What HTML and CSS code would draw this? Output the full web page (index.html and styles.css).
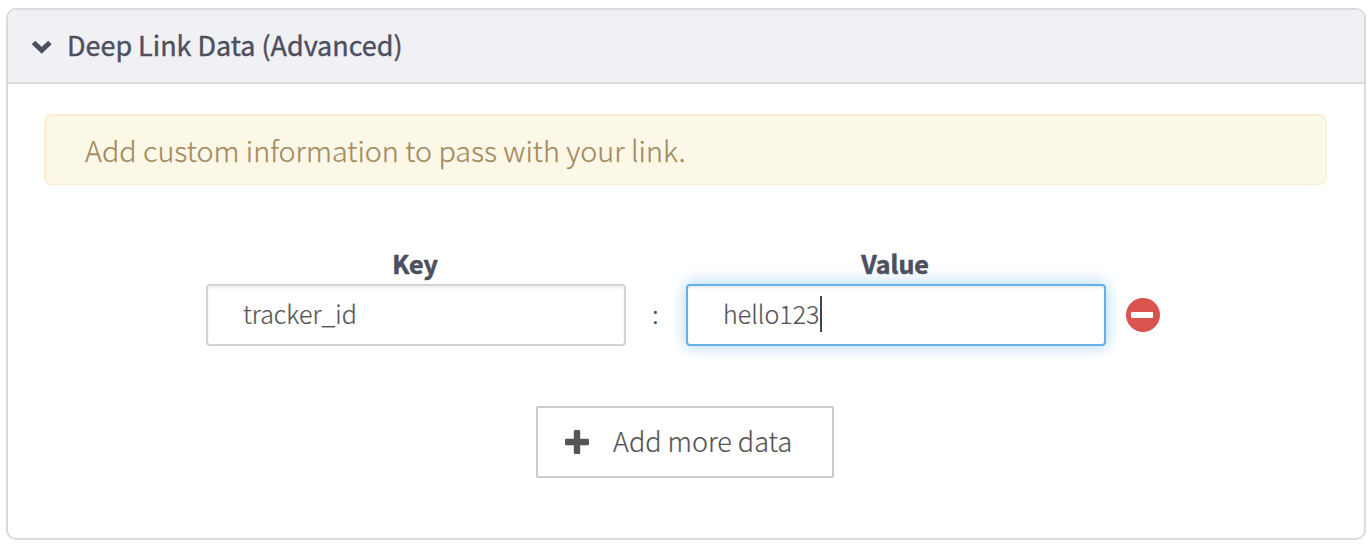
FILE: index.html
```html
<!DOCTYPE html>
<html lang="en">
<head>
<meta charset="utf-8">
<title>Deep Link Data</title>
<link rel="stylesheet" href="styles.css">
</head>
<body>
<section class="panel">
  <header class="panel-header">
    <svg class="chevron" viewBox="0 0 20 14" width="20" height="14"><path d="M1.500 2.500L9.700 10.400L17.900 2.500" fill="none" stroke="currentColor" stroke-width="5"/></svg>
    <h2 class="panel-title"><span>Deep Link Data (Advanced)</span></h2>
  </header>
  <div class="panel-body">
    <div class="notice"><span>Add custom information to pass with your link.</span></div>
    <div class="pairs">
      <label class="label"><span>Key</span></label>
      <label class="label label-value"><span>Value</span></label>
      <div class="field"><span class="field-text">tracker_id</span></div>
      <span class="colon">:</span>
      <div class="field field-focus"><span class="field-text">hello123</span><span class="caret"></span></div>
      <svg class="remove" viewBox="0 0 34 34" width="34" height="34"><circle cx="17" cy="17" r="17" fill="#d9534f"/><rect x="5" y="14" width="22" height="6" rx="0.8" fill="#fff"/></svg>
    </div>
    <button class="add" type="button">
      <svg class="plus" viewBox="0 0 24 24" width="24" height="24"><path d="M10 0h4q1.200 0 1.200 1.200V8.800H22.800q1.200 0 1.200 1.200v4q0 1.200-1.200 1.200H15.200V22.800q0 1.200-1.200 1.200h-4q-1.200 0-1.200-1.200V15.200H1.200q-1.200 0-1.200-1.200v-4q0-1.200 1.200-1.200H8.800V1.200q0-1.200 1.200-1.200z" fill="currentColor"/></svg>
      <span class="add-text">Add more data</span>
    </button>
  </div>
</section>
</body>
</html>
```
FILE: styles.css
```css
* { box-sizing: border-box; }
body {
  margin: 0;
  padding: 8px 6px 10px;
  height: 550px;
  background: #fff;
  color: #4d4f5e;
  font-family: "Noto Sans CJK SC", "Open Sans", sans-serif;
}
.panel {
  height: 532px;
  border: 2px solid #dbdbdb;
  border-radius: 10px;
  overflow: hidden;
}
.panel-header {
  height: 74px;
  display: flex;
  align-items: center;
  padding: 0 0 0 24px;
  background: #f0f1f5;
  border-bottom: 2px solid #dbdbdb;
}
.chevron { margin-top: 2px; }
.panel-title {
  margin: 0 0 2px 15px;
  font-size: 26.95px;
  line-height: 40px;
  font-weight: 400;
  -webkit-text-stroke: 0.4px currentColor;
}
.panel-body {
  display: flex;
  flex-direction: column;
  align-items: center;
  padding: 30px 36px 0;
}
.notice {
  width: 1283px;
  height: 71px;
  align-self: flex-start;
  padding: 0 39px;
  border: 2px solid #fcedcf;
  border-right-width: 1px;
  border-bottom-width: 1px;
  border-radius: 8px;
  background: #fcf8e7;
  color: #a48a60;
  font-size: 28.75px;
  line-height: 68px;
  font-weight: 300;
  -webkit-text-stroke: 0.25px currentColor;
}
.pairs {
  display: grid;
  grid-template-columns: 420px 60px 420px 54px;
  grid-template-rows: 40px 62px;
  margin: 59px 0 0 -2px;
  align-self: flex-start;
  padding-left: 164px;
}
.label {
  padding-right: 2px;
  text-align: center;
  font-size: 25px;
  line-height: 38px;
  font-weight: 700;
  -webkit-text-stroke: 0.6px currentColor;
}
.label-value { grid-column: 3 / 5; width: 420px; }
.field {
  display: flex;
  align-items: center;
  padding-left: 35px;
  border: 2px solid #d2d2d8;
  border-radius: 4px;
  box-shadow: inset 0 2px 3px rgba(0, 0, 0, .075);
  color: #555;
  font-size: 25px;
  line-height: 54px;
  font-weight: 300;
  -webkit-text-stroke: 0.2px currentColor;
}
.field-text { padding-bottom: 4px; }
.field-focus {
  border-color: #66afe9;
  box-shadow: inset 0 2px 3px rgba(0, 0, 0, .075), 0 0 16px rgba(102, 175, 233, .6);
}
.caret { width: 2px; height: 36px; margin: 0 0 2px 1px; background: #444; }
.colon { padding-right: 1px; text-align: center; font-size: 25px; line-height: 59px; font-weight: 300; -webkit-text-stroke: 0.3px currentColor; }
.remove { align-self: center; margin-left: 20px; }
.add {
  display: flex;
  align-items: center;
  width: 298px;
  height: 72px;
  margin: 60px 2px 0 0;
  padding: 0 0 0 27px;
  border: 2px solid #ccc;
  border-radius: 2px;
  background: #fff;
  color: #555;
  font: 300 27px/60px "Noto Sans CJK SC", "Open Sans", sans-serif;
  -webkit-text-stroke: 0.2px currentColor;
}
.add-text { margin-left: 24px; padding-bottom: 2px; }
```
